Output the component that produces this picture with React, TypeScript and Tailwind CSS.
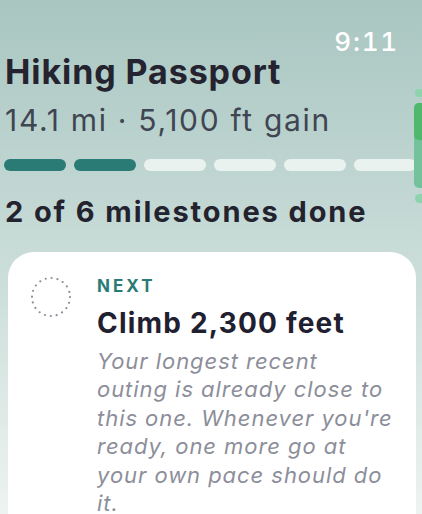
const bars = [true, true, false, false, false, false];

function DottedRing() {
  return (
    <svg width="44" height="44" viewBox="0 0 44 44" className="shrink-0">
      <circle
        cx="22"
        cy="22"
        r="19"
        fill="none"
        stroke="#8a8e98"
        strokeWidth="2.2"
        strokeLinecap="round"
        strokeDasharray="0 5.97"
      />
    </svg>
  );
}

export default function App() {
  return (
    <div
      className="relative w-[422px] h-[514px] overflow-hidden bg-gradient-to-b from-[#a9c6c1] via-[#c9dcd8] to-[#edf3f1] select-none"
      style={{ fontFamily: "Inter, 'Noto Sans', sans-serif" }}
    >
      {/* status bar */}
      <div className="flex justify-end items-start pt-[27px] pr-[23px] h-[52px]">
        <span className="text-[26px] font-medium leading-[30px] text-white tracking-[1.8px] tabular-nums">9:11</span>
      </div>

      <div>
        <h1 className="pl-[5px] text-[34px] font-bold leading-[40px] text-[#24232f] tracking-[0.9px]">
          Hiking Passport
        </h1>
        <p className="pl-[5px] mt-[10px] text-[30px] leading-[36px] text-[#3f4551] tracking-[1.7px]">
          14.1 mi · 5,100 ft gain
        </p>

        <div className="mt-[21px] pl-[4px] flex gap-[8px] w-[520px]">
          {bars.map((done, i) => (
            <div
              key={i}
              className={`h-[12px] w-[62px] shrink-0 rounded-full ${done ? "bg-[#2a7b76]" : "bg-[#eaf2f0]"}`}
            />
          ))}
        </div>

        <p className="pl-[5px] mt-[24px] text-[29px] font-bold leading-[34px] text-[#23232f] tracking-[1.9px]">
          2 of 6 milestones done
        </p>
      </div>

      {/* next milestone card */}
      <div className="mt-[23px] ml-[8px] w-[408px] h-[300px] rounded-[26px] bg-white flex gap-[24px] pl-[21px] pr-[8px] pt-[24px]">
        <div className="-mt-[1px]">
          <DottedRing />
        </div>
        <div className="flex flex-col">
          <span className="text-[17px] font-bold leading-[20px] tracking-[3px] text-[#2a7b76]">NEXT</span>
          <span className="mt-[10px] text-[28px] font-bold leading-[34px] text-[#1f2030] tracking-[1.2px]">
            Climb 2,300 feet
          </span>
          <p className="mt-[7px] text-[22px] italic leading-[28.4px] text-[#8c8e9a] tracking-[0.95px]">
            Your longest recent
            <br />
            outing is already close to
            <br />
            this one. Whenever you're
            <br />
            ready, one more go at
            <br />
            your own pace should do
            <br />
            it.
          </p>
        </div>
      </div>

      {/* scroll indicator */}
      <div className="absolute right-0 top-[89px] flex flex-col items-end gap-[6px]">
        <div className="w-[7px] h-[8px] rounded-l-full bg-[#8fd2ae]" />
        <div className="w-[8px] h-[85px] rounded-l-[5px] bg-[#74c29b] overflow-hidden">
          <div className="h-[37px] bg-[#4fb86c] rounded-bl-[5px]" />
        </div>
        <div className="w-[7px] h-[9px] rounded-l-full bg-[#8fd2ae]" />
      </div>
    </div>
  );
}
